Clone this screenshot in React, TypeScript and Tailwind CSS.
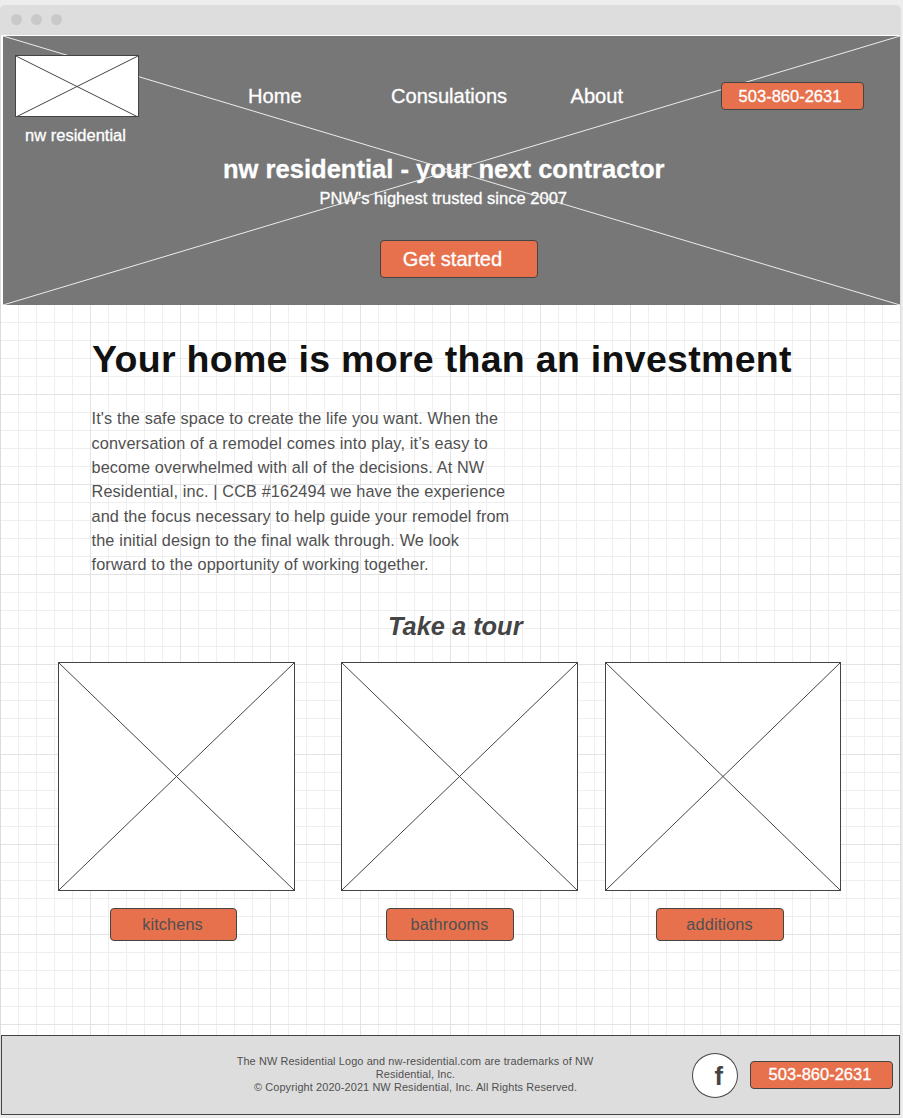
import type { ReactNode } from "react";

function Cross({ w, h, className }: { w: number; h: number; className: string }) {
  return (
    <svg className={className} width={w} height={h} viewBox={`0 0 ${w} ${h}`} fill="none" stroke="currentColor" strokeWidth="1">
      <path d={`M0 0L${w} ${h}M${w} 0L0 ${h}`} />
    </svg>
  );
}

function Button({ className, children }: { className: string; children: ReactNode }) {
  return (
    <button className={`flex shrink-0 items-center justify-center rounded-[4px] border border-[#444] bg-[#e7714d] whitespace-nowrap ${className}`}>
      {children}
    </button>
  );
}

const tiles = [
  { name: "kitchens", w: 237, tile: "w-[237px]", col: "w-[237px] ml-[57px]", btn: "w-[127px] ml-[52px] pr-[2px]" },
  { name: "bathrooms", w: 237, tile: "w-[237px]", col: "w-[237px] ml-[46px]", btn: "w-[128px] ml-[45px] pr-[1px]" },
  { name: "additions", w: 236, tile: "w-[236px]", col: "w-[236px] ml-[27px]", btn: "w-[128px] ml-[51px] pr-[1px]" },
];

const gridLines =
  "bg-[linear-gradient(to_right,#e3e3e3_1px,transparent_1px),linear-gradient(to_bottom,#e3e3e3_1px,transparent_1px),linear-gradient(to_right,#efefef_1px,transparent_1px),linear-gradient(to_bottom,#efefef_1px,transparent_1px)] bg-[size:90px_90px,90px_90px,18px_18px,18px_18px] bg-[position:89px_0,0_89px,17px_0,0_17px]";

export default function App() {
  return (
    <div className="h-[1118px] w-[903px] overflow-hidden bg-[#ededed] pt-[5px] font-['Liberation_Sans',Arial,sans-serif] text-[#505050]">
      <div className="flex h-[30px] w-[901px] items-center gap-[9px] rounded-t-[5px] bg-[#ddd] pl-[11px]">
        <span className="-mt-[1px] size-[11px] rounded-full bg-[#c9c9c9]" />
        <span className="-mt-[1px] size-[11px] rounded-full bg-[#c9c9c9]" />
        <span className="-mt-[1px] size-[11px] rounded-full bg-[#c9c9c9]" />
      </div>

      <div className="h-[1080px] w-[901px] border-x border-[#dcdcdc] bg-white">
        <header className="relative flex h-[270px] flex-col border-t border-l-2 border-white bg-[#777] text-white [-webkit-text-stroke:0.3px_white]">
          <Cross w={897} h={269} className="absolute top-0 left-0 z-10 text-[#ececec]" />
          <div className="flex h-[118px] items-start pl-[12px]">
            <div className="relative z-20 flex w-[124px] flex-col items-center pt-[19px]">
              <div className="h-[62px] w-[124px] border border-[#444] bg-white">
                <Cross w={122} h={61} className="block text-[#444]" />
              </div>
              <div className="mt-[8px] -ml-[3px] text-[16.5px] leading-[20px] whitespace-nowrap">nw residential</div>
            </div>
            <nav className="flex w-[582px] pt-[48px] pl-[109px] text-[20.1px] leading-[24px]">
              <a className="w-[143px]">Home</a>
              <a className="w-[179.5px]">Consulations</a>
              <a>About</a>
            </nav>
            <Button className="relative z-20 mt-[46px] h-[28px] w-[143px] pr-[5px] text-[16.5px]">503-860-2631</Button>
          </div>
          <h2 className="-ml-[15.5px] text-center text-[25.55px] leading-[30px] font-bold">nw residential - your next contractor</h2>
          <p className="mt-[5px] -ml-[16.5px] text-center text-[16.55px] leading-[20px]">PNW's highest trusted since 2007</p>
          <Button className="relative z-20 mt-[31px] ml-[377px] h-[38px] w-[158px] pr-[13px] text-[20.1px]">Get started</Button>
        </header>

        <main className={`h-[730px] ${gridLines}`}>
          <h1 className="pt-[32px] pl-[91px] text-[37.5px] leading-[44px] font-bold tracking-[0.3px] whitespace-nowrap text-[#111]">
            Your home is more than an investment
          </h1>
          <p className="mt-[25.4px] ml-[90.5px] text-[16.25px] leading-[24.33px] tracking-[0.14px] whitespace-nowrap">
            It's the safe space to create the life you want. When the
            <br />
            conversation of a remodel comes into play, it’s easy to
            <br />
            become overwhelmed with all of the decisions. At NW
            <br />
            Residential, inc. | CCB #162494 we have the experience
            <br />
            and the focus necessary to help guide your remodel from
            <br />
            the initial design to the final walk through. We look
            <br />
            forward to the opportunity of working together.
          </p>
          <h3 className="mt-[34.6px] ml-[387px] text-[25.4px] leading-[30px] font-bold whitespace-nowrap text-[#444] italic">Take a tour</h3>
          <div className="mt-[21px] flex">
            {tiles.map((t) => (
              <div key={t.name} className={`shrink-0 ${t.col}`}>
                <div className={`h-[229px] border border-[#444] bg-white ${t.tile}`}>
                  <Cross w={t.w - 2} h={227} className="block text-[#444]" />
                </div>
                <Button className={`mt-[17px] h-[33px] pb-[2px] text-[16.25px] tracking-[0.14px] ${t.btn}`}>{t.name}</Button>
              </div>
            ))}
          </div>
        </main>

        <footer className="flex h-[80px] items-start border border-[#444] bg-[#ddd]">
          <div className="ml-[213px] w-[400px] pt-[19px] text-center text-[10.9px] leading-[13px] tracking-[0.12px]">
            The NW Residential Logo and nw-residential.com are trademarks of NW
            <br />
            <span className="ml-[1px]">Residential, Inc.</span>
            <br />
            <span className="ml-[1px]">© Copyright 2020-2021 NW Residential, Inc. All Rights Reserved.</span>
          </div>
          <div className="mt-[17px] ml-[77px] h-[45px] w-[46px] rounded-[50%] border border-[#444] bg-white pt-[7px] pl-[21.5px] text-[25.6px] leading-[30px] font-bold text-[#444]">
            f
          </div>
          <Button className="mt-[25px] ml-[12px] h-[28px] w-[143px] pr-[3px] pb-[2px] text-[16.5px] text-white [-webkit-text-stroke:0.3px_white]">503-860-2631</Button>
        </footer>
      </div>
    </div>
  );
}
